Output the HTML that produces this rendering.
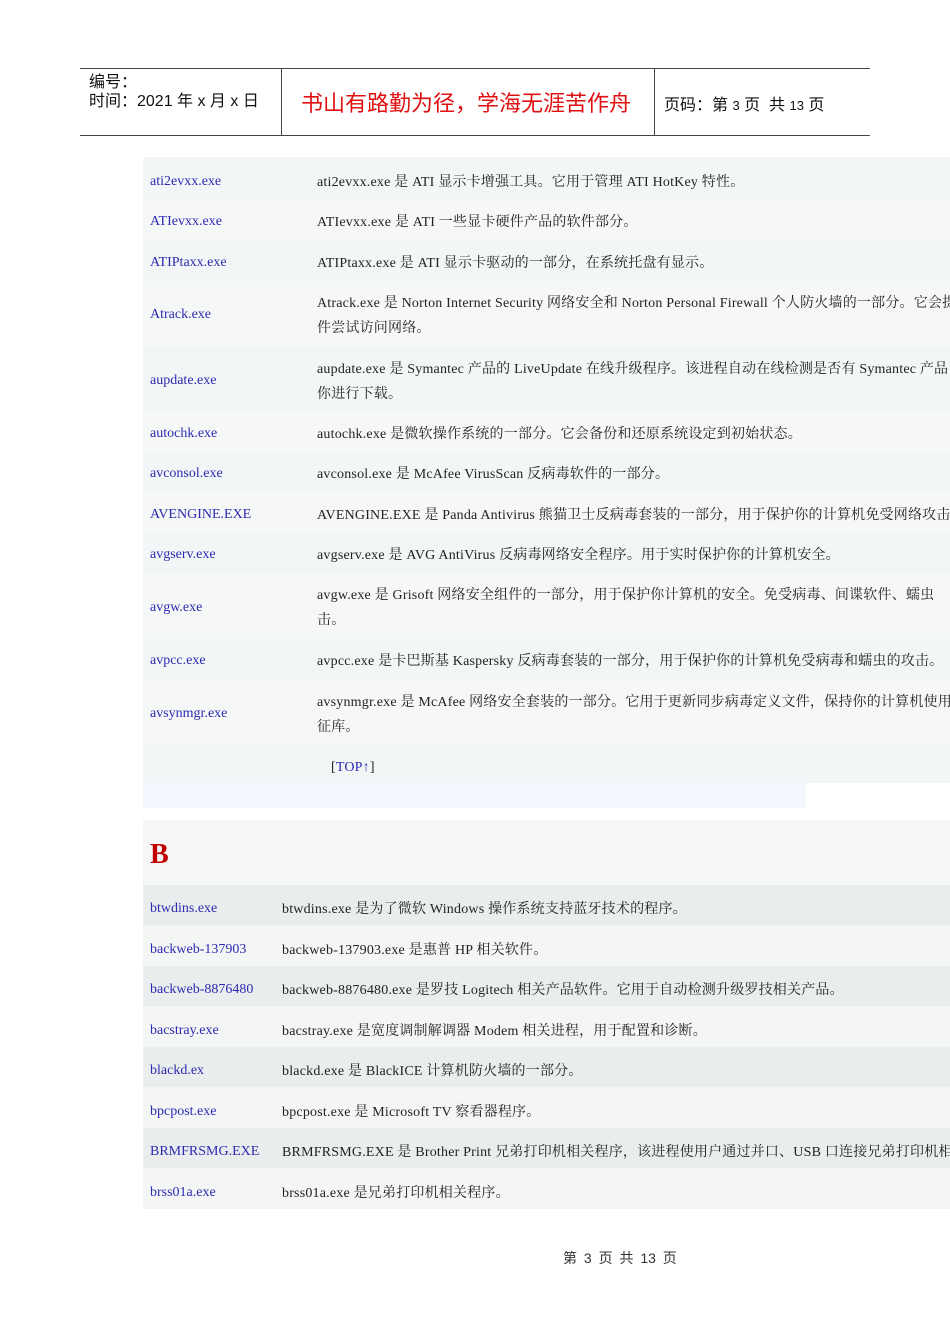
<!DOCTYPE html>
<html><head><meta charset="utf-8"><style>
*{margin:0;padding:0}
body{width:950px;height:1344px;position:relative;background:#fff;overflow:hidden;font-family:"Liberation Serif","Noto Serif CJK SC",serif;font-size:14px;color:#222}
.a{position:absolute}
.r{position:absolute;left:143px;width:807px}
.n{position:absolute;color:#2b2bb0;white-space:nowrap;margin-top:2px}
.d{position:absolute;white-space:nowrap;line-height:25px;margin-top:2px;letter-spacing:0.2px}
.hd{font-family:"Liberation Sans","Noto Sans CJK SC",sans-serif;font-size:16px;color:#111}
</style></head><body>
<div class="a" style="left:80px;top:68px;width:790px;border-top:1px solid #444"></div>
<div class="a" style="left:80px;top:135px;width:790px;border-top:1px solid #444"></div>
<div class="a" style="left:281px;top:68px;height:68px;border-left:1px solid #444"></div>
<div class="a" style="left:654px;top:68px;height:68px;border-left:1px solid #444"></div>
<div class="a hd" style="left:89px;top:68px">编号：</div>
<div class="a hd" style="left:89px;top:87px">时间：2021 年 x 月 x 日</div>
<div class="a" style="left:301px;top:86px;font-family:'Liberation Sans','Noto Sans CJK SC',sans-serif;font-size:22px;color:#e01010">书山有路勤为径，学海无涯苦作舟</div>
<div class="a hd" style="left:664px;top:91px">页码：第 <span style="font-size:13px">3</span> 页&nbsp; 共 <span style="font-size:13px">13</span> 页</div>

<div class="r" style="top:157px;height:626px;background:#f3f6f6"></div>
<div class="r" style="top:200px;height:40px;background:#f6f8f8"></div>
<div class="r" style="top:281px;height:66px;background:#f6f8f8"></div>
<div class="r" style="top:412px;height:40px;background:#f6f8f8"></div>
<div class="r" style="top:492px;height:41px;background:#f6f8f8"></div>
<div class="r" style="top:573px;height:65px;background:#f6f8f8"></div>
<div class="r" style="top:679px;height:66px;background:#f6f8f8"></div>
<div class="a" style="left:143px;top:783px;width:663px;height:25px;background:#f3f6fc"></div>

<div class="n" style="left:150px;top:172px">ati2evxx.exe</div><div class="d" style="left:317px;top:168px">ati2evxx.exe 是 ATI 显示卡增强工具。它用于管理 ATI HotKey 特性。</div>
<div class="n" style="left:150px;top:212px">ATIevxx.exe</div><div class="d" style="left:317px;top:208px">ATIevxx.exe 是 ATI 一些显卡硬件产品的软件部分。</div>
<div class="n" style="left:150px;top:253px">ATIPtaxx.exe</div><div class="d" style="left:317px;top:249px">ATIPtaxx.exe 是 ATI 显示卡驱动的一部分，在系统托盘有显示。</div>
<div class="n" style="left:150px;top:305px">Atrack.exe</div><div class="d" style="left:317px;top:289px">Atrack.exe 是 Norton Internet Security 网络安全和 Norton Personal Firewall 个人防火墙的一部分。它会提示<br>件尝试访问网络。</div>
<div class="n" style="left:150px;top:371px">aupdate.exe</div><div class="d" style="left:317px;top:355px">aupdate.exe 是 Symantec 产品的 LiveUpdate 在线升级程序。该进程自动在线检测是否有 Symantec 产品<br>你进行下载。</div>
<div class="n" style="left:150px;top:424px">autochk.exe</div><div class="d" style="left:317px;top:420px">autochk.exe 是微软操作系统的一部分。它会备份和还原系统设定到初始状态。</div>
<div class="n" style="left:150px;top:464px">avconsol.exe</div><div class="d" style="left:317px;top:460px">avconsol.exe 是 McAfee VirusScan 反病毒软件的一部分。</div>
<div class="n" style="left:150px;top:505px">AVENGINE.EXE</div><div class="d" style="left:317px;top:501px">AVENGINE.EXE 是 Panda Antivirus 熊猫卫士反病毒套装的一部分，用于保护你的计算机免受网络攻击</div>
<div class="n" style="left:150px;top:545px">avgserv.exe</div><div class="d" style="left:317px;top:541px">avgserv.exe 是 AVG AntiVirus 反病毒网络安全程序。用于实时保护你的计算机安全。</div>
<div class="n" style="left:150px;top:598px">avgw.exe</div><div class="d" style="left:317px;top:581px">avgw.exe 是 Grisoft 网络安全组件的一部分，用于保护你计算机的安全。免受病毒、间谍软件、蠕虫<br>击。</div>
<div class="n" style="left:150px;top:651px">avpcc.exe</div><div class="d" style="left:317px;top:647px">avpcc.exe 是卡巴斯基 Kaspersky 反病毒套装的一部分，用于保护你的计算机免受病毒和蠕虫的攻击。</div>
<div class="n" style="left:150px;top:704px">avsynmgr.exe</div><div class="d" style="left:317px;top:688px">avsynmgr.exe 是 McAfee 网络安全套装的一部分。它用于更新同步病毒定义文件，保持你的计算机使用<br>征库。</div>
<div class="d" style="left:331px;top:753px">[<span style="color:#2b2bb0">TOP↑</span>]</div>

<div class="r" style="top:820px;height:65px;background:#f4f6f8"></div>
<div class="a" style="left:150px;top:839px;font-size:28px;font-weight:bold;color:#c00000">B</div>
<div class="r" style="top:885px;height:40px;background:#e9eded"></div>
<div class="r" style="top:925px;height:41px;background:#f4f5f5"></div>
<div class="r" style="top:966px;height:40px;background:#e9eded"></div>
<div class="r" style="top:1006px;height:41px;background:#f4f5f5"></div>
<div class="r" style="top:1047px;height:40px;background:#e9eded"></div>
<div class="r" style="top:1087px;height:41px;background:#f4f5f5"></div>
<div class="r" style="top:1128px;height:40px;background:#e9eded"></div>
<div class="r" style="top:1168px;height:41px;background:#f4f5f5"></div>

<div class="n" style="left:150px;top:899px">btwdins.exe</div><div class="d" style="left:282px;top:895px">btwdins.exe 是为了微软 Windows 操作系统支持蓝牙技术的程序。</div>
<div class="n" style="left:150px;top:940px">backweb-137903</div><div class="d" style="left:282px;top:936px">backweb-137903.exe 是惠普 HP 相关软件。</div>
<div class="n" style="left:150px;top:980px">backweb-8876480</div><div class="d" style="left:282px;top:976px">backweb-8876480.exe 是罗技 Logitech 相关产品软件。它用于自动检测升级罗技相关产品。</div>
<div class="n" style="left:150px;top:1021px">bacstray.exe</div><div class="d" style="left:282px;top:1017px">bacstray.exe 是宽度调制解调器 Modem 相关进程，用于配置和诊断。</div>
<div class="n" style="left:150px;top:1061px">blackd.ex</div><div class="d" style="left:282px;top:1057px">blackd.exe 是 BlackICE 计算机防火墙的一部分。</div>
<div class="n" style="left:150px;top:1102px">bpcpost.exe</div><div class="d" style="left:282px;top:1098px">bpcpost.exe 是 Microsoft TV 察看器程序。</div>
<div class="n" style="left:150px;top:1142px">BRMFRSMG.EXE</div><div class="d" style="left:282px;top:1138px">BRMFRSMG.EXE 是 Brother Print 兄弟打印机相关程序，该进程使用户通过并口、USB 口连接兄弟打印机相</div>
<div class="n" style="left:150px;top:1183px">brss01a.exe</div><div class="d" style="left:282px;top:1179px">brss01a.exe 是兄弟打印机相关程序。</div>

<div class="a" style="left:563px;top:1248px;font-size:14px;color:#333;font-family:'Liberation Sans','Noto Sans CJK SC',sans-serif;word-spacing:3px">第 3 页 共 13 页</div>
</body></html>
